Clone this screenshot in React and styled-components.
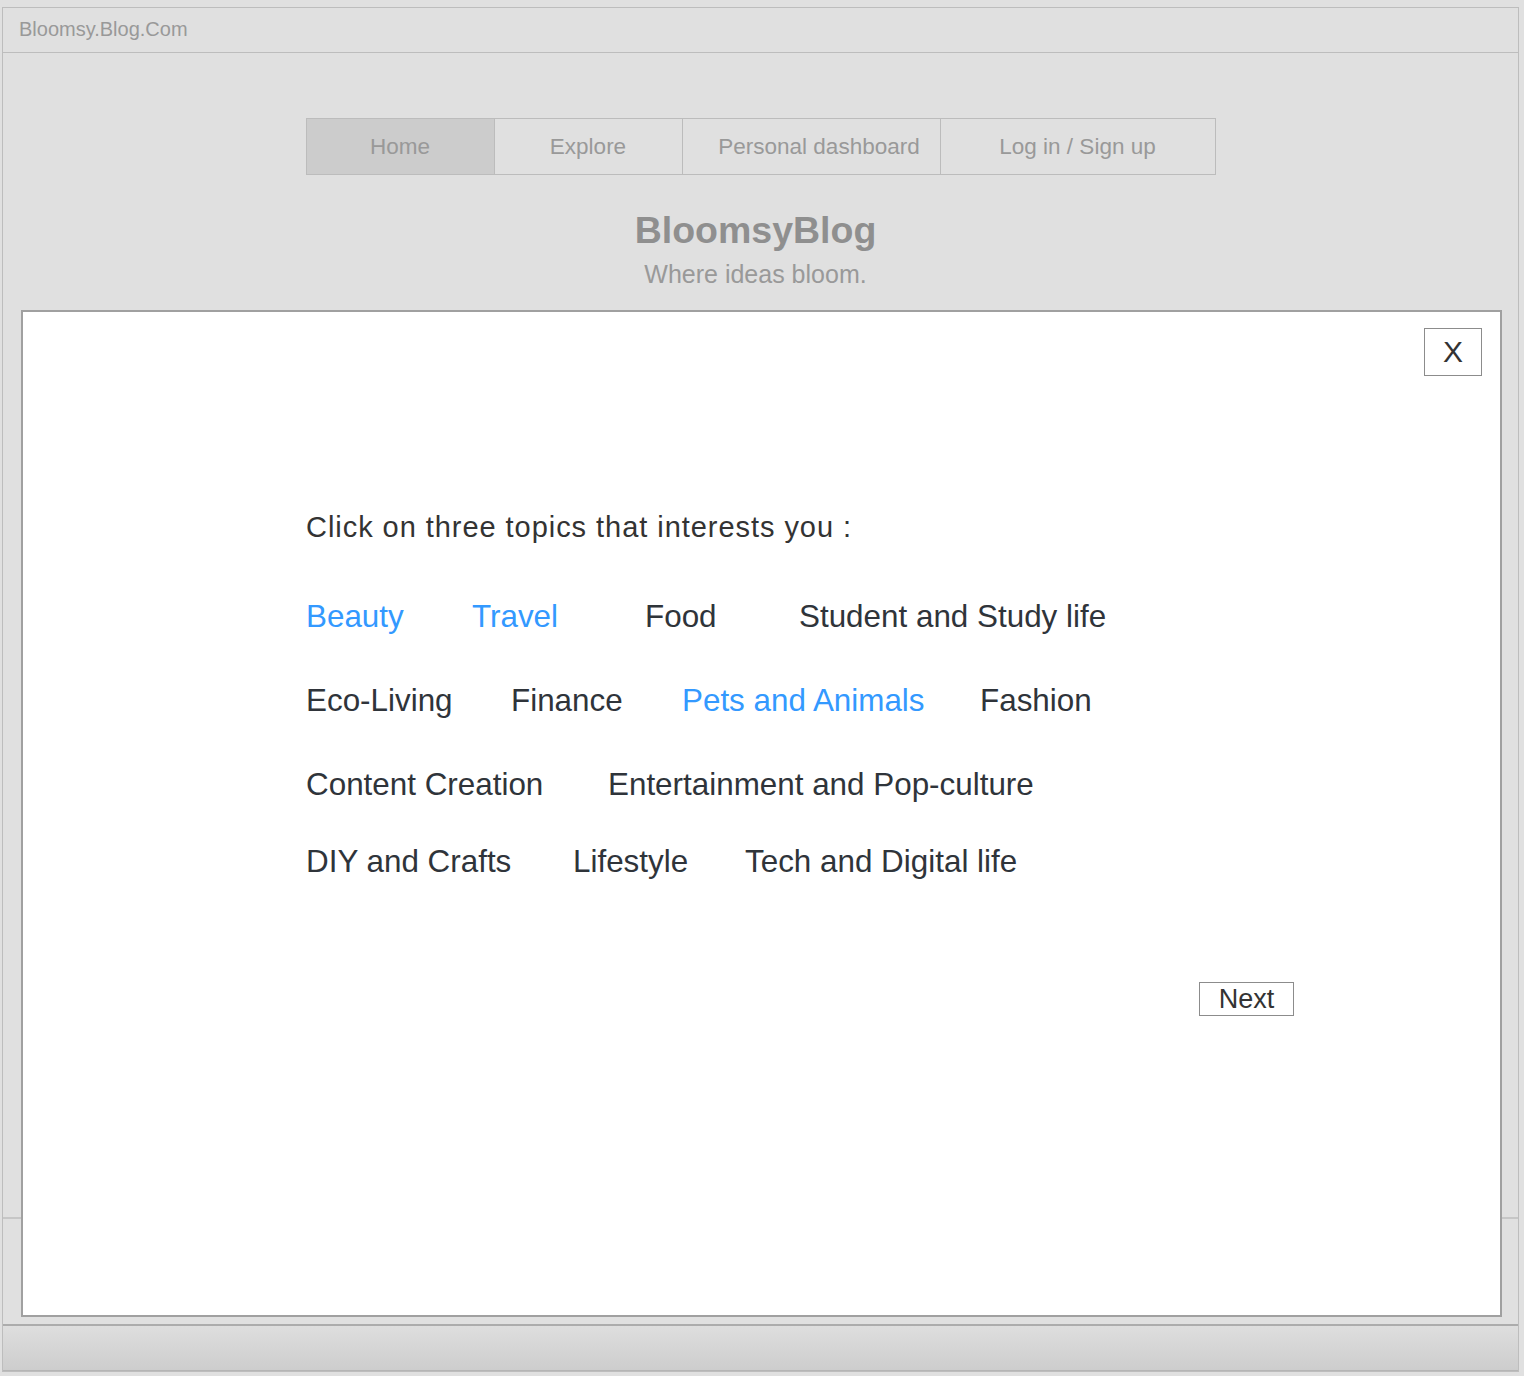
import React from "react";
import styled, { createGlobalStyle } from "styled-components";

const GlobalStyle = createGlobalStyle`
  html, body {
    margin: 0;
    padding: 0;
    background: #e0e0e0;
    font-family: "Liberation Sans", Arial, Helvetica, sans-serif;
  }
`;

const tabs = [
  { label: "Home", width: 187, active: true },
  { label: "Explore", width: 188 },
  { label: "Personal dashboard", width: 258, shift: 16 },
  { label: "Log in / Sign up", width: 275 },
];

const topicRows = [
  {
    cols: "166px 173px 154px auto",
    items: [
      { name: "Beauty", picked: true },
      { name: "Travel", picked: true },
      { name: "Food" },
      { name: "Student and Study life" },
    ],
  },
  {
    cols: "205px 171px 298px auto",
    items: [
      { name: "Eco-Living" },
      { name: "Finance" },
      { name: "Pets and Animals", picked: true },
      { name: "Fashion" },
    ],
  },
  {
    cols: "302px auto",
    items: [{ name: "Content Creation" }, { name: "Entertainment and Pop-culture" }],
  },
  {
    cols: "267px 172px auto",
    items: [{ name: "DIY and Crafts" }, { name: "Lifestyle" }, { name: "Tech and Digital life" }],
  },
];

export default function App() {
  return (
    <>
      <GlobalStyle />
      <Window>
        <AddressBar>Bloomsy.Blog.Com</AddressBar>
        <Page>
          <Nav>
            {tabs.map((t) => (
              <Tab key={t.label} $width={t.width} $active={t.active} $shift={t.shift}>
                {t.label}
              </Tab>
            ))}
          </Nav>
          <Title>BloomsyBlog</Title>
          <Tagline>Where ideas bloom.</Tagline>
        </Page>
        <Footer />

        <Modal>
          <CloseButton>X</CloseButton>
          <Prompt>Click on three topics that interests you :</Prompt>
          <Topics>
            {topicRows.map((row, i) => (
              <TopicRow key={i} $cols={row.cols}>
                {row.items.map((t) => (
                  <Topic key={t.name} $picked={t.picked}>
                    {t.name}
                  </Topic>
                ))}
              </TopicRow>
            ))}
          </Topics>
          <Actions>
            <NextButton>Next</NextButton>
          </Actions>
        </Modal>
      </Window>
    </>
  );
}

const Window = styled.div`
  position: relative;
  box-sizing: border-box;
  margin: 7px 0 0 2px;
  width: 1517px;
  height: 1365px;
  border: 1px solid #bdbdbd;
  display: flex;
  flex-direction: column;
`;

const AddressBar = styled.div`
  height: 44px;
  border-bottom: 1px solid #bdbdbd;
  padding-left: 16px;
  font-size: 20px;
  line-height: 42px;
  color: #999;
`;

const Page = styled.div`
  height: 1164px;
  border-bottom: 2px solid #c6c6c6;
  display: flex;
  flex-direction: column;
  align-items: center;
`;

const Nav = styled.div`
  margin-top: 65px;
  display: flex;
  border: 1px solid #bcbcbc;
  height: 55px;
`;

const Tab = styled.div`
  box-sizing: border-box;
  width: ${(p) => p.$width}px;
  padding-left: ${(p) => p.$shift || 0}px;
  display: flex;
  align-items: center;
  justify-content: center;
  font-size: 22.5px;
  color: #999;
  background: ${(p) => (p.$active ? "#cccccc" : "transparent")};
  & + & {
    border-left: 1px solid #bcbcbc;
  }
`;

const Title = styled.h1`
  margin: 33px 10px 0 0;
  font-size: 37.5px;
  line-height: 44px;
  font-weight: 700;
  color: #8f8f8f;
`;

const Tagline = styled.div`
  margin: 8px 10px 0 0;
  font-size: 25px;
  line-height: 28px;
  color: #999;
`;

const Footer = styled.div`
  margin-top: auto;
  height: 44px;
  border-top: 2px solid #acacac;
  border-bottom: 1px solid #b5b5b5;
  background: linear-gradient(#dedede, #cdcdcd);
`;

const Modal = styled.div`
  position: absolute;
  left: 18px;
  top: 302px;
  box-sizing: border-box;
  width: 1481px;
  height: 1007px;
  background: #fff;
  border: 2px solid #a0a0a0;
  padding: 197px 0 0 283px;
`;

const CloseButton = styled.div`
  position: absolute;
  top: 16px;
  right: 18px;
  box-sizing: border-box;
  width: 58px;
  height: 48px;
  border: 1px solid #8c8c8c;
  display: flex;
  align-items: center;
  justify-content: center;
  font-size: 30px;
  color: #333;
`;

const Prompt = styled.div`
  font-size: 29px;
  line-height: 36px;
  letter-spacing: 0.95px;
  color: #333;
`;

const Topics = styled.div`
  margin-top: 52px;
  display: flex;
  flex-direction: column;
  gap: 44px;
  & > :last-child {
    margin-top: -7px;
  }
`;

const TopicRow = styled.div`
  display: grid;
  grid-template-columns: ${(p) => p.$cols};
  height: 40px;
  align-items: center;
`;

const Topic = styled.span`
  font-size: 31.4px;
  line-height: 40px;
  white-space: nowrap;
  color: ${(p) => (p.$picked ? "#3399ff" : "#2f343a")};
  cursor: pointer;
`;

const Actions = styled.div`
  margin-top: 100px;
  padding-right: 206px;
  display: flex;
  justify-content: flex-end;
`;

const NextButton = styled.div`
  box-sizing: border-box;
  width: 95px;
  height: 34px;
  border: 1px solid #8c8c8c;
  display: flex;
  align-items: center;
  justify-content: center;
  font-size: 27px;
  color: #333;
`;
